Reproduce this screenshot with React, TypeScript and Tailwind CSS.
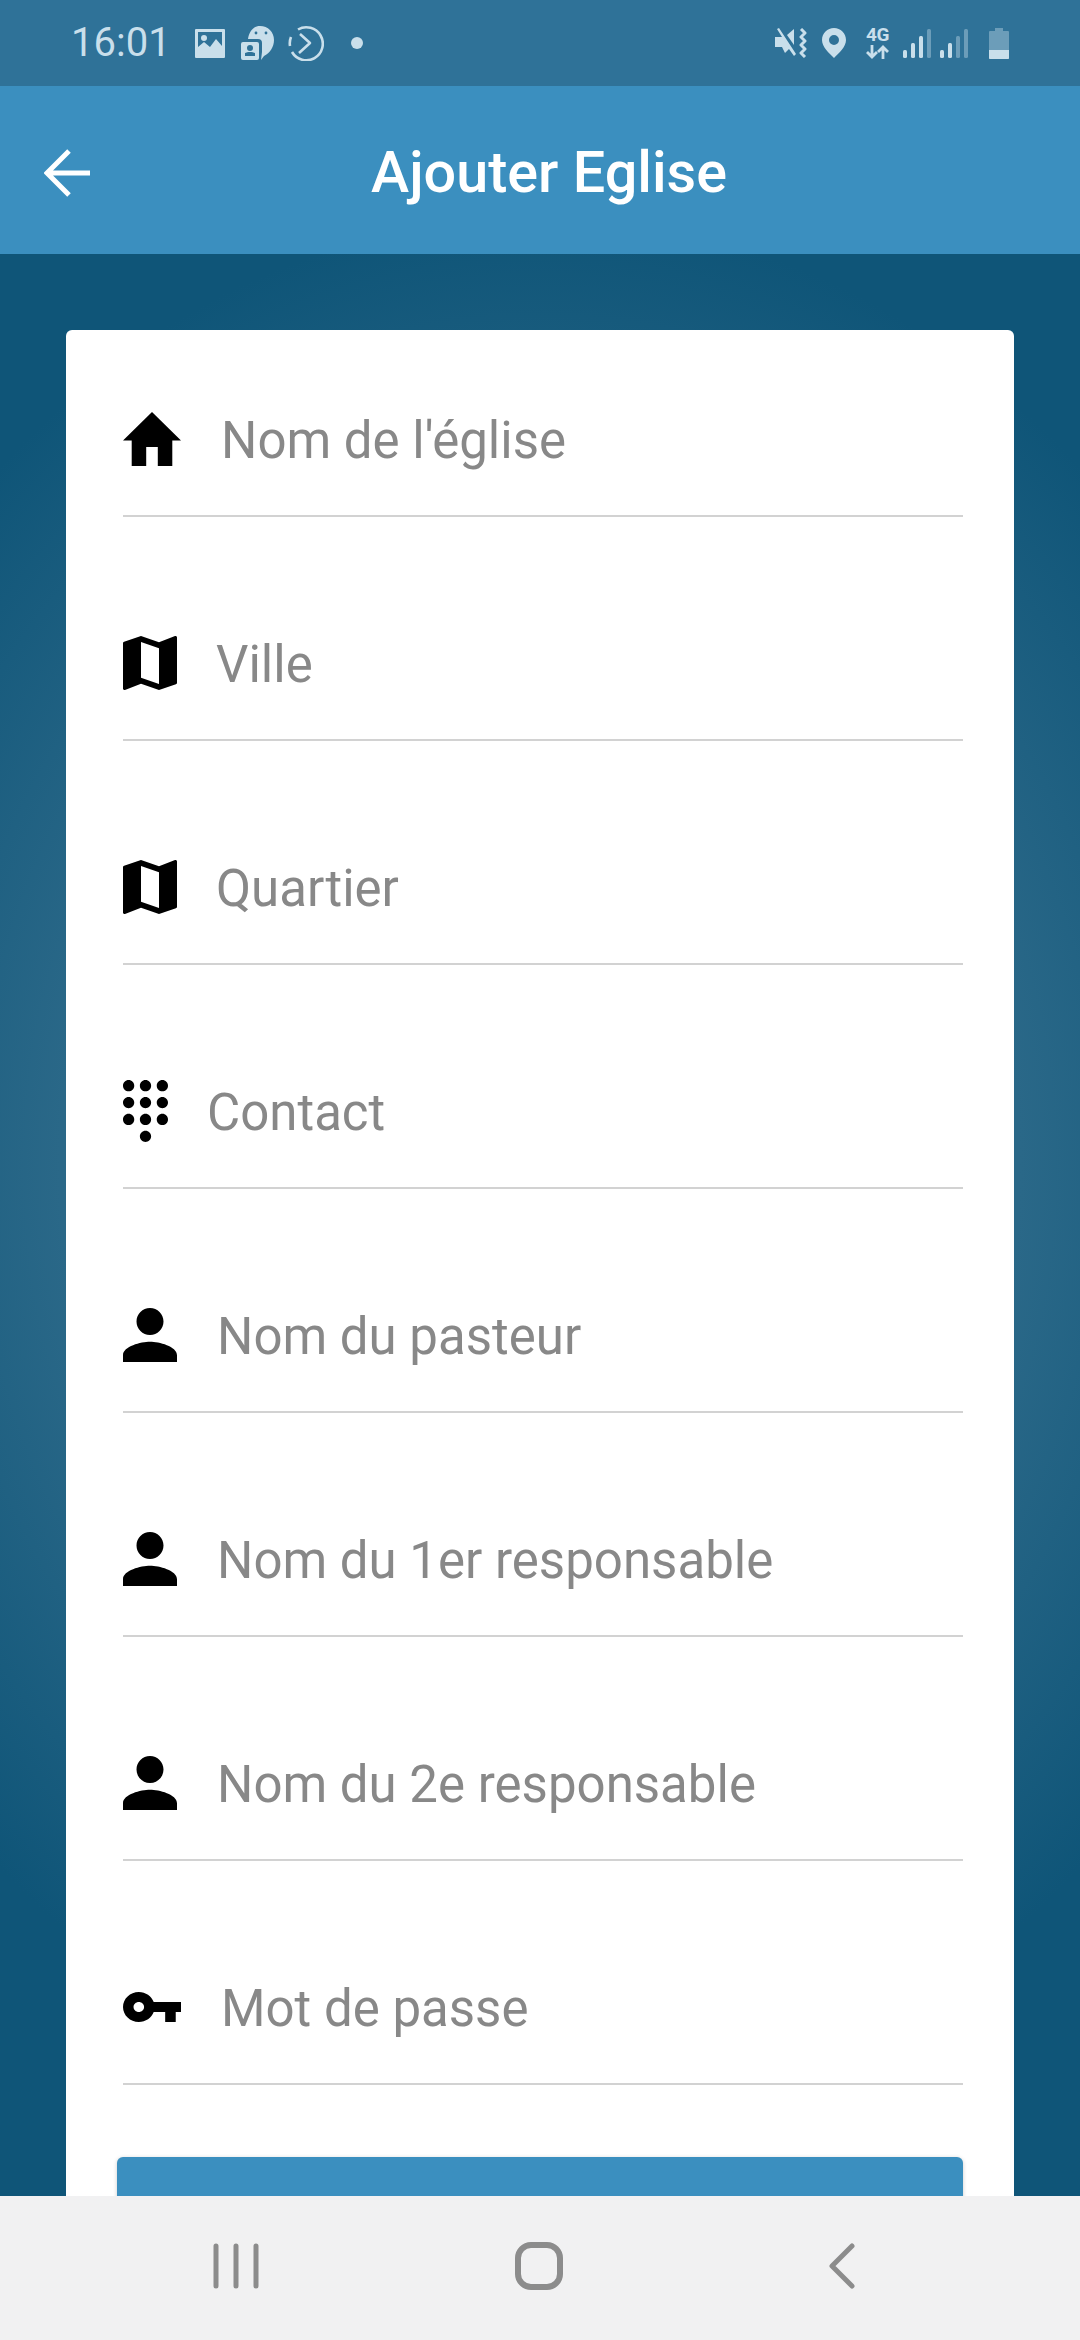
import React from "react";

const HOME = "M10 20v-6h4v6h5v-8h3L12 3 2 12h3v8z";
const MAP = "M20.5 3l-.16.03L15 5.1 9 3 3.36 4.9c-.21.07-.36.25-.36.48V20.5c0 .28.22.5.5.5l.16-.03L9 18.9l6 2.1 5.64-1.9c.21-.07.36-.25.36-.48V3.5c0-.28-.22-.5-.5-.5zM15 19l-6-2.11V5l6 2.11V19z";
const PERSON = "M12 12c2.21 0 4-1.79 4-4s-1.79-4-4-4-4 1.79-4 4 1.79 4 4 4zm0 2c-2.67 0-8 1.34-8 4v2h16v-2c0-2.66-5.33-4-8-4z";
const KEY = "M12.65 10C11.83 7.67 9.61 6 7 6c-3.31 0-6 2.69-6 6s2.69 6 6 6c2.61 0 4.83-1.67 5.65-4H17v4h4v-4h2v-4H12.65zM7 14c-1.1 0-2-.9-2-2s.9-2 2-2 2 .9 2 2-.9 2-2 2z";
const DIALPAD = "M12 19c-1.1 0-2 .9-2 2s.9 2 2 2 2-.9 2-2-.9-2-2-2zM6 1c-1.1 0-2 .9-2 2s.9 2 2 2 2-.9 2-2-.9-2-2-2zm0 6c-1.1 0-2 .9-2 2s.9 2 2 2 2-.9 2-2-.9-2-2-2zm0 6c-1.1 0-2 .9-2 2s.9 2 2 2 2-.9 2-2-.9-2-2-2zm12-8c1.1 0 2-.9 2-2s-.9-2-2-2-2 .9-2 2 .9 2 2 2zm-6 8c-1.1 0-2 .9-2 2s.9 2 2 2 2-.9 2-2-.9-2-2-2zm6 0c-1.1 0-2 .9-2 2s.9 2 2 2 2-.9 2-2-.9-2-2-2zm0-6c-1.1 0-2 .9-2 2s.9 2 2 2 2-.9 2-2-.9-2-2-2zm-6 0c-1.1 0-2 .9-2 2s.9 2 2 2 2-.9 2-2-.9-2-2-2zm0-6c-1.1 0-2 .9-2 2s.9 2 2 2 2-.9 2-2-.9-2-2-2z";

type Field = { label: string; d: string; box: string; size: string; gap: string };

const fields: Field[] = [
  { label: "Nom de l'église", d: HOME, box: "2 3 20 17", size: "w-[58px] h-[54px]", gap: "ml-[40px]" },
  { label: "Ville", d: MAP, box: "3 3 18 18", size: "w-[54px] h-[54px]", gap: "ml-[39px]" },
  { label: "Quartier", d: MAP, box: "3 3 18 18", size: "w-[54px] h-[54px]", gap: "ml-[39px]" },
  { label: "Contact", d: DIALPAD, box: "4 1 16 22", size: "w-[45px] h-[62px]", gap: "ml-[39px]" },
  { label: "Nom du pasteur", d: PERSON, box: "4 4 16 16", size: "w-[54px] h-[54px]", gap: "ml-[40px]" },
  { label: "Nom du 1er responsable", d: PERSON, box: "4 4 16 16", size: "w-[54px] h-[54px]", gap: "ml-[40px]" },
  { label: "Nom du 2e responsable", d: PERSON, box: "4 4 16 16", size: "w-[54px] h-[54px]", gap: "ml-[40px]" },
  { label: "Mot de passe", d: KEY, box: "1 6 22 12", size: "w-[58px] h-[30px]", gap: "ml-[40px]" },
];

function StatusLeft() {
  return (
    <div className="flex items-center text-[#c9dfeb]">
      <span className="text-[40px] font-normal leading-none">16:01</span>
      {/* gallery notification */}
      <svg viewBox="0 0 30 29" className="ml-[24px] w-[30px] h-[29px]">
        <path fill="currentColor" fillRule="evenodd" d="M1 0h28a1 1 0 0 1 1 1v27a1 1 0 0 1-1 1H1a1 1 0 0 1-1-1V1a1 1 0 0 1 1-1zM3 3v15l6-5 6 5 6-8 6 7V3z" />
        <circle cx="9" cy="9" r="3" fill="currentColor" />
      </svg>
      {/* chat with contact card */}
      <svg viewBox="0 0 33 34" className="ml-[16px] w-[33px] h-[34px]">
        <path fill="currentColor" d="M19 0c8 0 14 6 14 14 0 7-4 13-10 16l-3 4 1-8V17a4 4 0 0 0-4-4H7C8 6 12 0 19 0z" />
        <circle cx="15" cy="7" r="1.4" fill="#2f7298" />
        <circle cx="25" cy="7" r="1.4" fill="#2f7298" />
        <path fill="currentColor" fillRule="evenodd" d="M2 16h14a2 2 0 0 1 2 2v14a2 2 0 0 1-2 2H2a2 2 0 0 1-2-2V18a2 2 0 0 1 2-2zm7 3a3 3 0 1 0 0 6 3 3 0 0 0 0-6zm-5 8v3h10v-3c-2-1.500-8-1.500-10 0z" />
      </svg>
      {/* circular play badge */}
      <svg viewBox="0 0 36 36" className="ml-[14px] w-[36px] h-[36px]" fill="none" stroke="currentColor" strokeWidth="2.6">
        <path d="M10 4.500A16.500 16.500 0 1 1 4 27" />
        <path d="M2 21a16.500 16.500 0 0 1 1-9" />
        <path d="M12 9l10 9-11 10" strokeLinejoin="round" />
      </svg>
      <span className="ml-[27px] w-[12px] h-[12px] rounded-full bg-[#c9dfeb]" />
    </div>
  );
}

function StatusRight() {
  return (
    <div className="flex items-center text-[#c9dfeb]">
      {/* muted, vibrate */}
      <svg viewBox="0 0 32 30" className="w-[32px] h-[30px]">
        <path fill="currentColor" d="M2 1l2-1 17 26-2 2-5-7-4 4-3-6H0V9h7z" />
        <path fill="currentColor" d="M19 1v16L12 7z" />
        <path fill="none" stroke="currentColor" strokeWidth="3" strokeLinejoin="round" d="M26 1l4 4-4 4 4 4-4 4 4 4-4 4 4 4" />
      </svg>
      {/* location pin */}
      <svg viewBox="0 0 24 30" className="ml-[15px] w-[24px] h-[30px]">
        <path fill="currentColor" fillRule="evenodd" d="M12 0c6.600 0 12 5.400 12 12 0 7-7 13-12 18C7 25 0 19 0 12 0 5.400 5.400 0 12 0zm0 7a5 5 0 1 0 0 10 5 5 0 0 0 0-10z" />
      </svg>
      {/* mobile data */}
      <div className="ml-[20px] flex flex-col items-center w-[23px]">
        <span className="text-[19px] font-bold leading-[15px] tracking-[-0.3px]">4G</span>
        <svg viewBox="0 0 23 14" className="mt-[3px] w-[23px] h-[14px]" fill="none" stroke="currentColor" strokeWidth="2.8">
          <path d="M6 0v12M1 7l5 5 5-5M17 14V2M12 7l5-5 5 5" />
        </svg>
      </div>
      {/* signal bars for both SIMs */}
      <svg viewBox="0 0 28 29" className="ml-[14px] w-[28px] h-[29px]">
        <rect x="0" y="21" width="4" height="8" rx="1.500" fill="currentColor" />
        <rect x="8" y="14" width="4" height="15" rx="1.500" fill="currentColor" />
        <rect x="16" y="7" width="4" height="22" rx="1.500" fill="currentColor" />
        <rect x="24" y="0" width="4" height="29" rx="1.500" fill="currentColor" opacity="0.4" />
      </svg>
      <svg viewBox="0 0 28 29" className="ml-[9px] w-[28px] h-[29px]">
        <rect x="0" y="21" width="4" height="8" rx="1.500" fill="currentColor" />
        <rect x="8" y="14" width="4" height="15" rx="1.500" fill="currentColor" />
        <rect x="16" y="7" width="4" height="22" rx="1.500" fill="currentColor" opacity="0.4" />
        <rect x="24" y="0" width="4" height="29" rx="1.500" fill="currentColor" opacity="0.4" />
      </svg>
      {/* battery */}
      <svg viewBox="0 0 20 31" className="ml-[21px] w-[20px] h-[31px]">
        <path fill="currentColor" opacity="0.4" d="M6 0h8v3h5a1 1 0 0 1 1 1v27H0V4a1 1 0 0 1 1-1h5z" />
        <path fill="currentColor" d="M0 22h20v8a1 1 0 0 1-1 1H1a1 1 0 0 1-1-1z" />
      </svg>
    </div>
  );
}

function FieldRow({ field, first }: { field: Field; first: boolean }) {
  return (
    <div className={`${first ? "" : "mt-[70px]"} h-[154px] flex items-center border-b-2 border-[#d2d2d2]`}>
      <svg viewBox={field.box} preserveAspectRatio="none" className={`${field.size} shrink-0`}>
        <path d={field.d} fill="#000" />
      </svg>
      <span className={`${field.gap} pt-[3px] text-[51px] leading-[60px] text-[#888888]`}>{field.label}</span>
    </div>
  );
}

export default function App() {
  return (
    <div className="w-[1080px] h-[2340px] flex flex-col overflow-hidden font-['Roboto',sans-serif]">
      <header className="h-[86px] shrink-0 bg-[#2f7298] flex items-center justify-between pl-[71px] pr-[71px]">
        <StatusLeft />
        <StatusRight />
      </header>

      <div className="h-[168px] shrink-0 bg-[#3b8fbf] flex items-center pl-[44px] pt-[6px]">
        <svg viewBox="0 0 46 48" className="w-[46px] h-[48px] shrink-0" fill="none" stroke="#fff" strokeWidth="5">
          <path d="M46 24H4M25 2L3 24l22 22" />
        </svg>
        <h1 className="ml-[281px] text-[57.5px] font-medium leading-none text-white">Ajouter Eglise</h1>
      </div>

      <main className="flex-1 min-h-0 overflow-hidden px-[66px] pt-[76px] bg-[radial-gradient(ellipse_800px_950px_at_50%_47%,#2e6f90_0%,#2a6888_60%,#0f5578_100%)]">
        <div className="bg-white rounded-t-[6px] pt-[33px] pl-[57px] pr-[51px] pb-[40px]">
          {fields.map((f, i) => (
            <FieldRow key={f.label} field={f} first={i === 0} />
          ))}
          <div className="mt-[72px] -ml-[6px] h-[130px] rounded-[6px] bg-[#3b8fbf] shadow-[0_1px_4px_rgba(0,0,0,0.2)]" />
        </div>
      </main>

      <nav className="h-[144px] shrink-0 bg-[#f1f1f2] flex items-center pb-[4px]">
        <svg viewBox="0 0 46 46" className="ml-[213px] w-[46px] h-[46px]" fill="none" stroke="#8c8c8c" strokeWidth="5" strokeLinecap="round">
          <path d="M3 3v40M23 3v40M43 3v40" />
        </svg>
        <svg viewBox="0 0 48 48" className="ml-[256px] w-[48px] h-[48px]" fill="none" stroke="#8c8c8c" strokeWidth="6">
          <rect x="3" y="3" width="42" height="42" rx="13" />
        </svg>
        <svg viewBox="0 0 26 46" className="ml-[266px] w-[26px] h-[46px]" fill="none" stroke="#8c8c8c" strokeWidth="5" strokeLinecap="round" strokeLinejoin="round">
          <path d="M23 3L3 23l20 20" />
        </svg>
      </nav>
    </div>
  );
}
